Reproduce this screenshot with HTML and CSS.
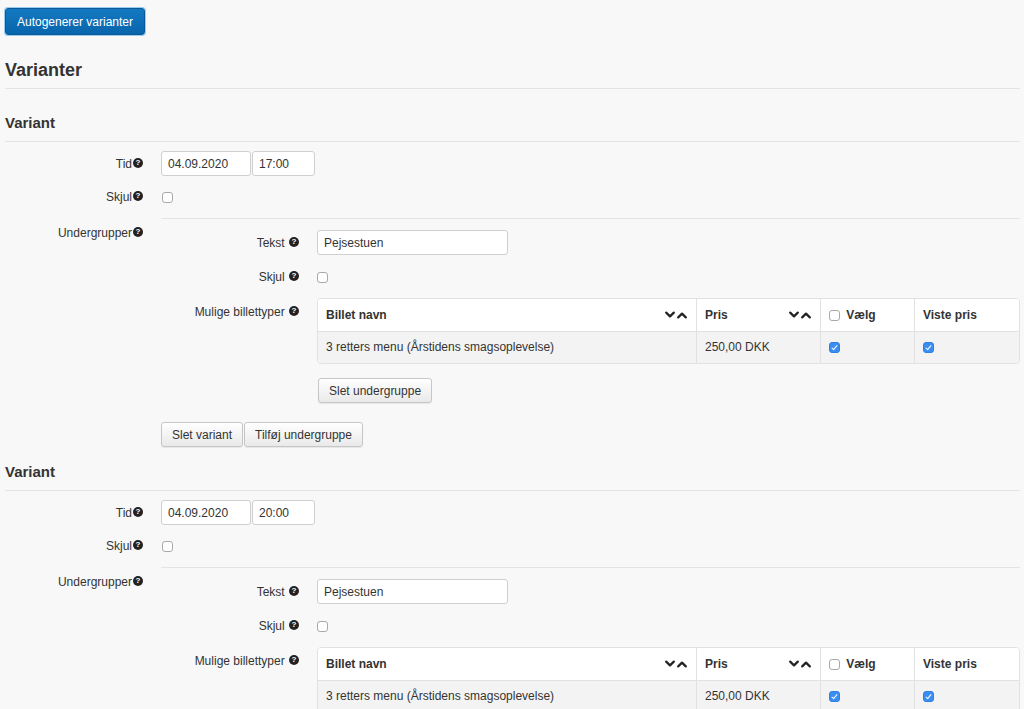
FILE: index.html
```html
<!DOCTYPE html>
<html lang="da">
<head>
<meta charset="utf-8">
<title>Varianter</title>
<link rel="stylesheet" href="styles.css">
</head>
<body>
<div class="page">
  <div class="toolbar">
    <button class="btn btn-primary" type="button">Autogenerer varianter</button>
  </div>
  <h2 class="section-title">Varianter</h2>

  <section class="variant">
    <h3 class="variant-title">Variant</h3>
    <div class="form-row">
      <label class="lbl">Tid<span class="help">?</span></label>
      <div class="ctrl ctrl-inline">
        <input class="inp inp-date" type="text" value="04.09.2020">
        <input class="inp inp-time" type="text" value="17:00">
      </div>
    </div>
    <div class="form-row row-check">
      <label class="lbl">Skjul<span class="help">?</span></label>
      <div class="ctrl"><input class="cb cb-outer" type="checkbox"></div>
    </div>
    <div class="form-row row-sub">
      <label class="lbl lbl-sub">Undergrupper<span class="help">?</span></label>
      <div class="ctrl sub">
        <div class="subgroup">
          <div class="form-row sub-row">
            <label class="lbl">Tekst <span class="help sp">?</span></label>
            <div class="ctrl"><input class="inp inp-text" type="text" value="Pejsestuen"></div>
          </div>
          <div class="form-row sub-row row-check">
            <label class="lbl">Skjul <span class="help sp">?</span></label>
            <div class="ctrl"><input class="cb" type="checkbox"></div>
          </div>
          <div class="form-row sub-row row-table">
            <label class="lbl lbl-table">Mulige billettyper <span class="help sp">?</span></label>
            <div class="ctrl">
              <table class="tbl">
                <colgroup>
                  <col class="c1"><col class="c2"><col class="c3"><col class="c4">
                </colgroup>
                <thead>
                  <tr>
                    <th>Billet navn<span class="sort"><svg width="23" height="8" viewBox="0 0 23 8"><path d="M1.2 1.6 L5 5.4 L8.8 1.6 M13.2 6.4 L17 2.6 L20.8 6.4" fill="none" stroke="#222" stroke-width="2.2" stroke-linecap="round" stroke-linejoin="round"/></svg></span></th>
                    <th>Pris<span class="sort"><svg width="23" height="8" viewBox="0 0 23 8"><path d="M1.2 1.6 L5 5.4 L8.8 1.6 M13.2 6.4 L17 2.6 L20.8 6.4" fill="none" stroke="#222" stroke-width="2.2" stroke-linecap="round" stroke-linejoin="round"/></svg></span></th>
                    <th><input class="cb cb-head" type="checkbox"> Vælg</th>
                    <th>Viste pris</th>
                  </tr>
                </thead>
                <tbody>
                  <tr>
                    <td>3 retters menu (Årstidens smagsoplevelse)</td>
                    <td>250,00 DKK</td>
                    <td><input class="cb" type="checkbox" checked></td>
                    <td><input class="cb" type="checkbox" checked></td>
                  </tr>
                </tbody>
              </table>
            </div>
          </div>
          <div class="form-row sub-row row-btn">
            <span class="lbl"></span>
            <div class="ctrl"><button class="btn" type="button">Slet undergruppe</button></div>
          </div>
        </div>
        <div class="actions">
          <button class="btn" type="button">Slet variant</button>
          <button class="btn" type="button">Tilføj undergruppe</button>
        </div>
      </div>
    </div>
  </section>

  <section class="variant">
    <h3 class="variant-title">Variant</h3>
    <div class="form-row">
      <label class="lbl">Tid<span class="help">?</span></label>
      <div class="ctrl ctrl-inline">
        <input class="inp inp-date" type="text" value="04.09.2020">
        <input class="inp inp-time" type="text" value="20:00">
      </div>
    </div>
    <div class="form-row row-check">
      <label class="lbl">Skjul<span class="help">?</span></label>
      <div class="ctrl"><input class="cb cb-outer" type="checkbox"></div>
    </div>
    <div class="form-row row-sub">
      <label class="lbl lbl-sub">Undergrupper<span class="help">?</span></label>
      <div class="ctrl sub">
        <div class="subgroup">
          <div class="form-row sub-row">
            <label class="lbl">Tekst <span class="help sp">?</span></label>
            <div class="ctrl"><input class="inp inp-text" type="text" value="Pejsestuen"></div>
          </div>
          <div class="form-row sub-row row-check">
            <label class="lbl">Skjul <span class="help sp">?</span></label>
            <div class="ctrl"><input class="cb" type="checkbox"></div>
          </div>
          <div class="form-row sub-row row-table">
            <label class="lbl lbl-table">Mulige billettyper <span class="help sp">?</span></label>
            <div class="ctrl">
              <table class="tbl">
                <colgroup>
                  <col class="c1"><col class="c2"><col class="c3"><col class="c4">
                </colgroup>
                <thead>
                  <tr>
                    <th>Billet navn<span class="sort"><svg width="23" height="8" viewBox="0 0 23 8"><path d="M1.2 1.6 L5 5.4 L8.8 1.6 M13.2 6.4 L17 2.6 L20.8 6.4" fill="none" stroke="#222" stroke-width="2.2" stroke-linecap="round" stroke-linejoin="round"/></svg></span></th>
                    <th>Pris<span class="sort"><svg width="23" height="8" viewBox="0 0 23 8"><path d="M1.2 1.6 L5 5.4 L8.8 1.6 M13.2 6.4 L17 2.6 L20.8 6.4" fill="none" stroke="#222" stroke-width="2.2" stroke-linecap="round" stroke-linejoin="round"/></svg></span></th>
                    <th><input class="cb cb-head" type="checkbox"> Vælg</th>
                    <th>Viste pris</th>
                  </tr>
                </thead>
                <tbody>
                  <tr>
                    <td>3 retters menu (Årstidens smagsoplevelse)</td>
                    <td>250,00 DKK</td>
                    <td><input class="cb" type="checkbox" checked></td>
                    <td><input class="cb" type="checkbox" checked></td>
                  </tr>
                </tbody>
              </table>
            </div>
          </div>
        </div>
      </div>
    </div>
  </section>
</div>
</body>
</html>
```

FILE: styles.css
```css
html, body {
  margin: 0;
  padding: 0;
  background: #f8f8f8;
}
body {
  font-family: "Liberation Sans", Arial, sans-serif;
  font-size: 12px;
  color: #333;
}
.page {
  padding: 8px 4px 0 5px;
}
.toolbar {
  display: flex;
}
.btn {
  height: 25px;
  padding: 0 10px;
  font-family: "Liberation Sans", Arial, sans-serif;
  font-size: 12px;
  color: #333;
  background: linear-gradient(#ffffff, #e9e9e9);
  border: 1px solid #c6c6c6;
  border-radius: 3px;
  box-shadow: 0 1px 1px rgba(0, 0, 0, 0.07);
  cursor: pointer;
}
.btn-primary {
  height: 27px;
  width: 140px;
  padding: 0;
  color: #fff;
  background: linear-gradient(#1479c2, #0865ab);
  border: 1px solid #0a5a98;
  box-shadow: 0 0 0 1px #9ccbf0;
}
.section-title {
  margin: 24px 0 0;
  font-size: 18px;
  line-height: 22px;
  font-weight: bold;
  color: #333;
  padding-bottom: 7px;
  border-bottom: 1px solid #e4e4e4;
}
.variant-title {
  margin: 16px 0 0;
  font-size: 15px;
  line-height: 18px;
  font-weight: bold;
  color: #333;
  padding-bottom: 9px;
  border-bottom: 1px solid #e4e4e4;
}
.section-title + .variant .variant-title {
  margin-top: 25px;
}
.form-row {
  display: grid;
  grid-template-columns: 138px 1fr;
  column-gap: 18px;
  align-items: center;
  margin-top: 9px;
}
.row-check {
  margin-top: 8px;
  min-height: 25px;
}
.sub-row.row-check {
  margin-top: 9px;
}
.lbl {
  text-align: right;
  line-height: 16px;
  color: #333;
  white-space: nowrap;
}
.help {
  display: inline-block;
  width: 10px;
  height: 10px;
  border-radius: 50%;
  background: #222;
  color: #fff;
  font-size: 8px;
  font-weight: bold;
  line-height: 10px;
  text-align: center;
  vertical-align: middle;
  margin-top: -3px;
  margin-left: 1px;
}
.help.sp {
  margin-left: 1px;
}
.ctrl-inline {
  display: flex;
  gap: 1px;
}
.inp {
  box-sizing: border-box;
  height: 25px;
  margin: 0;
  padding: 0 6px;
  font-family: "Liberation Sans", Arial, sans-serif;
  font-size: 12px;
  color: #333;
  background: #fff;
  border: 1px solid #cfcfcf;
  border-radius: 3px;
  outline: none;
}
.inp-date { width: 90px; }
.inp-time { width: 63px; }
.inp-text { width: 191px; }
.cb {
  appearance: none;
  -webkit-appearance: none;
  box-sizing: border-box;
  width: 11px;
  height: 11px;
  margin: 0;
  border: 1px solid #a9a9a9;
  border-radius: 3px;
  background: #fff;
  position: relative;
  vertical-align: middle;
}
.cb:checked {
  background: #3a8ef2;
  border-color: #2f80e2;
}
.cb:checked::after {
  content: "";
  position: absolute;
  left: 3px;
  top: 1px;
  width: 2px;
  height: 5px;
  border: solid #fff;
  border-width: 0 1.5px 1.5px 0;
  transform: rotate(40deg);
}
.cb-outer {
  margin-left: 1px;
}
.row-sub {
  margin-top: 9px;
  align-items: start;
}
.lbl-sub {
  padding-top: 7px;
}
.sub {
  border-top: 1px solid #e4e4e4;
}
.subgroup {
  padding-top: 2px;
}
.subgroup > .sub-row:first-child {
  margin-top: 9px;
}
.row-table {
  align-items: start;
}
.lbl-table {
  padding-top: 6px;
}
.tbl {
  width: 100%;
  table-layout: fixed;
  border-collapse: separate;
  border-spacing: 0;
  border: 1px solid #e1e1e1;
  border-radius: 4px;
  background: #fff;
  overflow: hidden;
}
.c1 { width: 379px; }
.c2 { width: 124px; }
.c3 { width: 94px; }
.c4 { width: auto; }
.tbl th, .tbl td {
  text-align: left;
  padding: 8px 8px;
  border-right: 1px solid #e1e1e1;
}
.tbl th:last-child, .tbl td:last-child {
  border-right: none;
}
.tbl th {
  font-weight: bold;
  line-height: 16px;
  background: #fff;
  color: #333;
}
.tbl td {
  line-height: 15px;
  background: #f3f3f3;
  border-top: 1px solid #e1e1e1;
  color: #333;
}
.sort {
  float: right;
  display: flex;
  align-items: center;
  height: 16px;
}
.sort svg {
  display: block;
}
.cb-head {
  margin-right: 3px;
  vertical-align: -2px;
}
.row-btn {
  margin-top: 14px;
}
.row-btn .ctrl .btn {
  margin-left: 1px;
}
.actions {
  display: flex;
  gap: 1px;
  margin-top: 19px;
}
```
